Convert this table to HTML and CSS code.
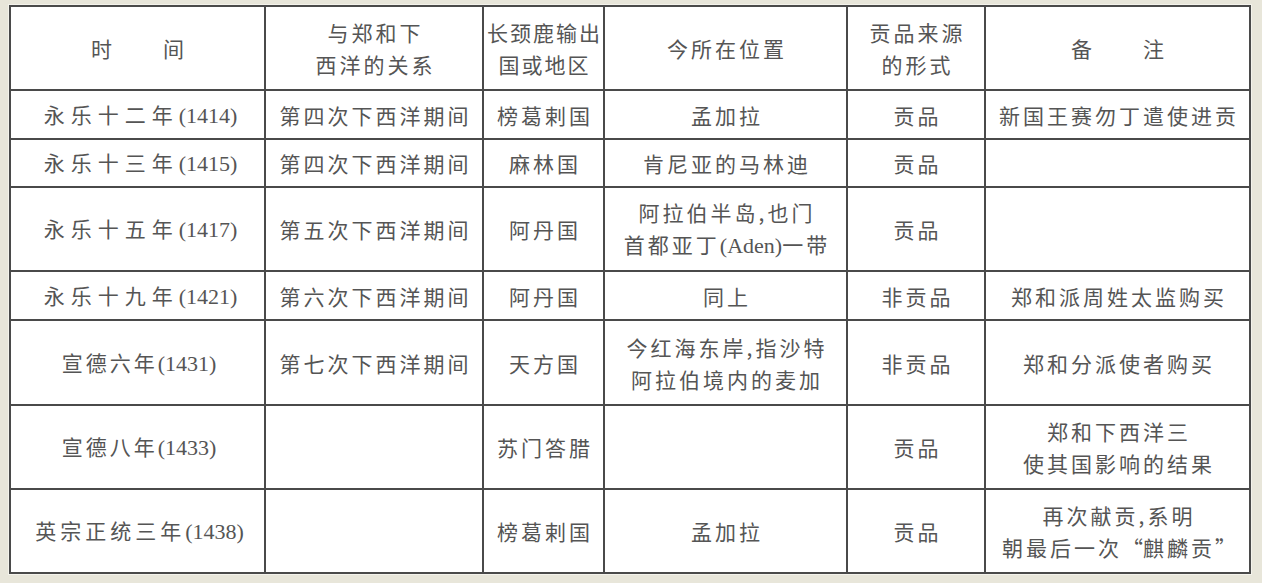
FILE: index.html
```html
<!DOCTYPE html>
<html lang="zh-CN">
<head>
<meta charset="utf-8">
<title>长颈鹿输入表</title>
<link rel="stylesheet" href="styles.css">
</head>
<body>
<div class="page">
<table class="grid">
<colgroup>
<col class="w1"><col class="w2"><col class="w3"><col class="w4"><col class="w5"><col class="w6">
</colgroup>
<tr class="tall">
<td>时　　间</td>
<td>与郑和下<br>西洋的关系</td>
<td class="tight">长颈鹿输出<br>国或地区</td>
<td>今所在位置</td>
<td>贡品来源<br>的形式</td>
<td>备　　注</td>
</tr>
<tr class="short">
<td class="wide">永乐十二年<span class="num">(1414)</span></td>
<td>第四次下西洋期间</td>
<td>榜葛剌国</td>
<td>孟加拉</td>
<td>贡品</td>
<td>新国王赛勿丁遣使进贡</td>
</tr>
<tr class="short2">
<td class="wide">永乐十三年<span class="num">(1415)</span></td>
<td>第四次下西洋期间</td>
<td>麻林国</td>
<td>肯尼亚的马林迪</td>
<td>贡品</td>
<td></td>
</tr>
<tr class="tall">
<td class="wide">永乐十五年<span class="num">(1417)</span></td>
<td>第五次下西洋期间</td>
<td>阿丹国</td>
<td>阿拉伯半岛,也门<br>首都亚丁<span class="num">(Aden)</span>一带</td>
<td>贡品</td>
<td></td>
</tr>
<tr class="short">
<td class="wide">永乐十九年<span class="num">(1421)</span></td>
<td>第六次下西洋期间</td>
<td>阿丹国</td>
<td>同上</td>
<td>非贡品</td>
<td>郑和派周姓太监购买</td>
</tr>
<tr class="tall2">
<td>宣德六年<span class="num">(1431)</span></td>
<td>第七次下西洋期间</td>
<td>天方国</td>
<td>今红海东岸,指沙特<br>阿拉伯境内的麦加</td>
<td>非贡品</td>
<td>郑和分派使者购买</td>
</tr>
<tr class="tall">
<td>宣德八年<span class="num">(1433)</span></td>
<td></td>
<td>苏门答腊</td>
<td></td>
<td>贡品</td>
<td>郑和下西洋三<br>使其国影响的结果</td>
</tr>
<tr class="tall">
<td class="mid">英宗正统三年<span class="num">(1438)</span></td>
<td></td>
<td>榜葛剌国</td>
<td>孟加拉</td>
<td>贡品</td>
<td>再次献贡,系明<br>朝最后一次<span class="q">“</span>麒麟贡<span class="q">”</span></td>
</tr>
</table>
</div>
</body>
</html>
```

FILE: styles.css
```css
html, body {
  margin: 0;
  padding: 0;
  background: #e8e6da;
}

.page {
  padding: 5px 0 0 9px;
  height: 578px;
}

.grid {
  border-collapse: collapse;
  table-layout: fixed;
  width: 1242px;
  background: #ffffff;
  border: 2px solid #2f2f2f;
  box-shadow: 0 0 0 1px #f4f3ec;
  font-family: "Noto Sans CJK SC", "Noto Sans CJK JP", sans-serif;
  font-size: 21px;
  color: #555555;
}

.w1 { width: 255px; }
.w2 { width: 218px; }
.w3 { width: 121px; }
.w4 { width: 243px; }
.w5 { width: 138px; }
.w6 { width: 265px; }

.grid td {
  border: 2px solid #4a4a4a;
  padding: 0 0 0 3px;
  text-align: center;
  vertical-align: middle;
  letter-spacing: 3px;
  line-height: 32px;
  white-space: nowrap;
  overflow: hidden;
}

.grid td.tight {
  letter-spacing: 2px;
  padding-left: 2px;
}

.grid td.wide {
  letter-spacing: 6px;
  padding-left: 6px;
}

.grid td.mid {
  letter-spacing: 4px;
  padding-left: 4px;
}

.num {
  font-family: "Liberation Serif", "Times New Roman", serif;
  font-size: 22px;
  letter-spacing: 0;
}

.q {
  letter-spacing: 0;
}

.tall { height: 84px; }
.tall2 { height: 85px; }
.short { height: 49px; }
.short2 { height: 48px; }
```
